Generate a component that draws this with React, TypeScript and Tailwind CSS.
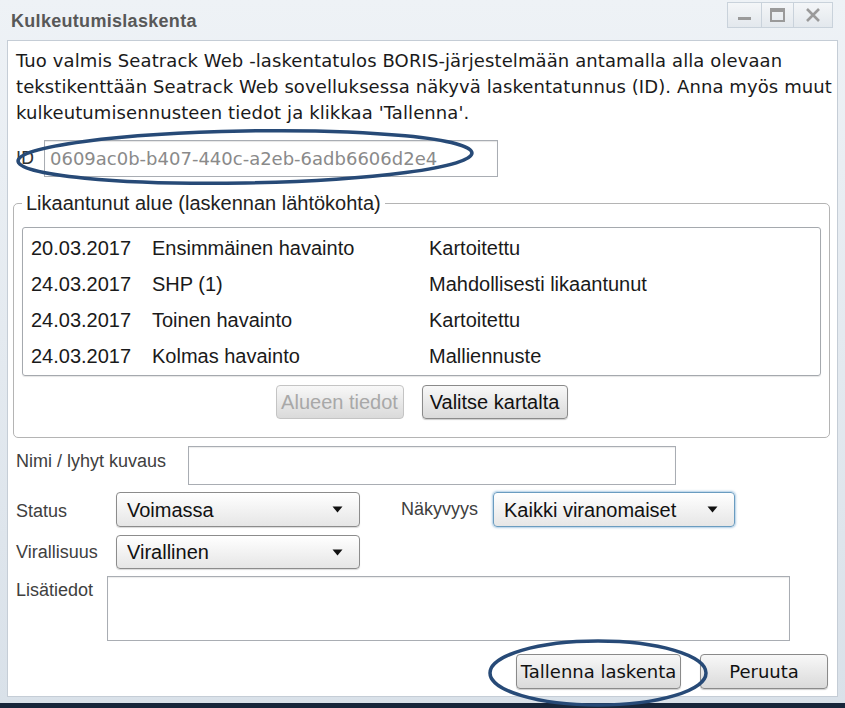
import React from "react";

const serif = { fontFamily: '"DejaVu Sans", Verdana, sans-serif' };
const sans = { fontFamily: '"Liberation Sans", Arial, sans-serif' };

function Arrow() {
  return (
    <svg width="11" height="7" viewBox="0 0 11 7" className="shrink-0">
      <path d="M0.5 0.5 L10.5 0.5 L5.5 6.5 Z" fill="#111" />
    </svg>
  );
}

function Select({ value, w, focus }: { value: string; w: string; focus?: boolean }) {
  return (
    <div
      className={`${w} flex items-center justify-between pl-[10px] pr-[16px] rounded-[4px] border bg-gradient-to-b from-[#ffffff] to-[#e6e6e6] ${
        focus
          ? "border-[#6a9cc0] shadow-[0_0_2px_1px_rgba(120,170,210,0.6)]"
          : "border-[#8c8c8c] shadow-[0_1px_1px_rgba(0,0,0,0.15)]"
      }`}
    >
      <span className="text-[20px] text-[#111]" style={sans}>
        {value}
      </span>
      <Arrow />
    </div>
  );
}

function Btn({ label, w, disabled, font }: { label: string; w: string; disabled?: boolean; font?: React.CSSProperties }) {
  return (
    <div
      className={`${w} flex items-center justify-center rounded-[4px] border bg-gradient-to-b from-[#f8f8f8] to-[#dadada] ${
        disabled ? "border-[#c4c4c4] text-[#a8a8a8]" : "border-[#8a8a8a] text-[#111] shadow-[0_1px_1px_rgba(0,0,0,0.2)]"
      }`}
      style={font ?? sans}
    >
      {label}
    </div>
  );
}

const rows = [
  ["20.03.2017", "Ensimmäinen havainto", "Kartoitettu"],
  ["24.03.2017", "SHP (1)", "Mahdollisesti likaantunut"],
  ["24.03.2017", "Toinen havainto", "Kartoitettu"],
  ["24.03.2017", "Kolmas havainto", "Malliennuste"],
];

export default function App() {
  return (
    <div className="relative w-[845px] h-[708px] overflow-hidden flex flex-col bg-gradient-to-b from-[#eef2f6] to-[#d9e1e9]">
      {/* title bar */}
      <div className="h-[40px] shrink-0 flex items-start justify-between pl-[11px] pr-[12px]">
        <div className="pt-[8px] text-[18px] font-bold tracking-[0.3px] text-[#585858]" style={sans}>
          Kulkeutumislaskenta
        </div>
        <div className="mt-[2px] flex h-[26px] border border-[#c9d2db] bg-gradient-to-b from-[#f4f6f8] to-[#e3e8ed]">
          <div className="w-[34px] flex items-end justify-center pb-[7px] border-r border-[#c9d2db]">
            <div className="w-[13px] h-[3px] bg-[#9a9a9a]" />
          </div>
          <div className="w-[32px] flex items-center justify-center border-r border-[#c9d2db]">
            <div className="w-[15px] h-[14px] border-[2px] border-t-[4px] border-[#9a9a9a]" />
          </div>
          <div className="w-[38px] flex items-center justify-center">
            <svg width="16" height="16" viewBox="0 0 16 16">
              <path d="M2 2 L14 14 M14 2 L2 14" stroke="#9a9a9a" strokeWidth="2.6" />
            </svg>
          </div>
        </div>
      </div>

      {/* content */}
      <div className="flex-1 mx-[7px] border border-[#c5cdd6] bg-white flex flex-col">
        <div
          className="pl-[8px] pt-[7px] text-[18px] leading-[26px] tracking-[0.1px] text-[#1a1a1a] whitespace-nowrap"
          style={serif}
        >
          Tuo valmis Seatrack Web -laskentatulos BORIS-järjestelmään antamalla alla olevaan
          <br />
          tekstikenttään Seatrack Web sovelluksessa näkyvä laskentatunnus (ID). Anna myös muut
          <br />
          kulkeutumisennusteen tiedot ja klikkaa 'Tallenna'.
        </div>

        <div className="mt-[14px] flex items-center pl-[8px]">
          <span className="w-[28px] text-[17px] text-[#333]" style={serif}>
            ID
          </span>
          <div
            className="w-[454px] h-[37px] flex items-center pl-[5px] border border-[#a9adb3] shadow-[inset_0_1px_1px_rgba(0,0,0,0.1)] text-[18px] text-[#8a8a8a]"
            style={serif}
          >
            0609ac0b-b407-440c-a2eb-6adb6606d2e4
          </div>
        </div>

        <fieldset className="mt-[14px] ml-[5px] w-[817px] border border-[#b4b4b4] rounded-[5px] px-[8px] pb-[18px]">
          <legend className="px-[4px] text-[20px] leading-[24px] text-[#222]" style={sans}>
            Likaantunut alue (laskennan lähtökohta)
          </legend>
          <div className="mt-[12px] border border-[#a5a9ae] rounded-[3px] pt-[2px] pb-[1px] shadow-[0_1px_1px_rgba(0,0,0,0.1)]">
            {rows.map((r, i) => (
              <div key={i} className="h-[36px] flex items-center pl-[8px] text-[20px] text-[#1a1a1a]" style={sans}>
                <span className="w-[121px]">{r[0]}</span>
                <span className="w-[277px]">{r[1]}</span>
                <span>{r[2]}</span>
              </div>
            ))}
          </div>
          <div className="mt-[9px] flex justify-center gap-[18px] text-[20px]">
            <Btn label="Alueen tiedot" w="w-[128px] h-[34px]" disabled />
            <Btn label="Valitse kartalta" w="w-[146px] h-[34px]" />
          </div>
        </fieldset>

        <div className="mt-[8px] flex items-start pl-[8px]">
          <span className="w-[172px] pt-[2px] text-[18px] text-[#404040]" style={sans}>
            Nimi / lyhyt kuvaus
          </span>
          <div className="w-[488px] h-[39px] border border-[#a9adb3] shadow-[inset_0_1px_1px_rgba(0,0,0,0.08)]" />
        </div>

        <div className="mt-[7px] flex items-center pl-[8px]">
          <span className="w-[100px] pt-[3px] text-[18px] text-[#404040]" style={sans}>
            Status
          </span>
          <Select value="Voimassa" w="w-[244px] h-[35px]" />
          <span className="ml-[41px] w-[92px] text-[18px] text-[#404040]" style={sans}>
            Näkyvyys
          </span>
          <Select value="Kaikki viranomaiset" w="w-[242px] h-[35px]" focus />
        </div>

        <div className="mt-[8px] flex items-center pl-[8px]">
          <span className="w-[100px] text-[18px] text-[#404040]" style={sans}>
            Virallisuus
          </span>
          <Select value="Virallinen" w="w-[244px] h-[34px]" />
        </div>

        <div className="mt-[7px] flex items-start pl-[8px]">
          <span className="w-[91px] pt-[1px] text-[18px] text-[#404040]" style={sans}>
            Lisätiedot
          </span>
          <div className="w-[683px] h-[65px] border border-[#a9adb3] shadow-[inset_0_1px_1px_rgba(0,0,0,0.08)]" />
        </div>

        <div className="mt-[13px] flex justify-end gap-[19px] pr-[9px] text-[18px]">
          <Btn label="Tallenna laskenta" w="w-[165px] h-[35px]" font={serif} />
          <Btn label="Peruuta" w="w-[128px] h-[35px]" font={serif} />
        </div>
      </div>

      <div className="h-[6px] shrink-0" />
      <div className="h-[5px] shrink-0 bg-[#17263a]" />

      {/* annotation ellipses */}
      <svg className="absolute inset-0 pointer-events-none" width="845" height="708">
        <ellipse cx="245" cy="157" rx="227" ry="26" transform="rotate(-1 245 157)" fill="none" stroke="#274a77" strokeWidth="3.5" />
        <ellipse cx="598" cy="673" rx="108" ry="32" fill="none" stroke="#274a77" strokeWidth="3.5" />
      </svg>
    </div>
  );
}
